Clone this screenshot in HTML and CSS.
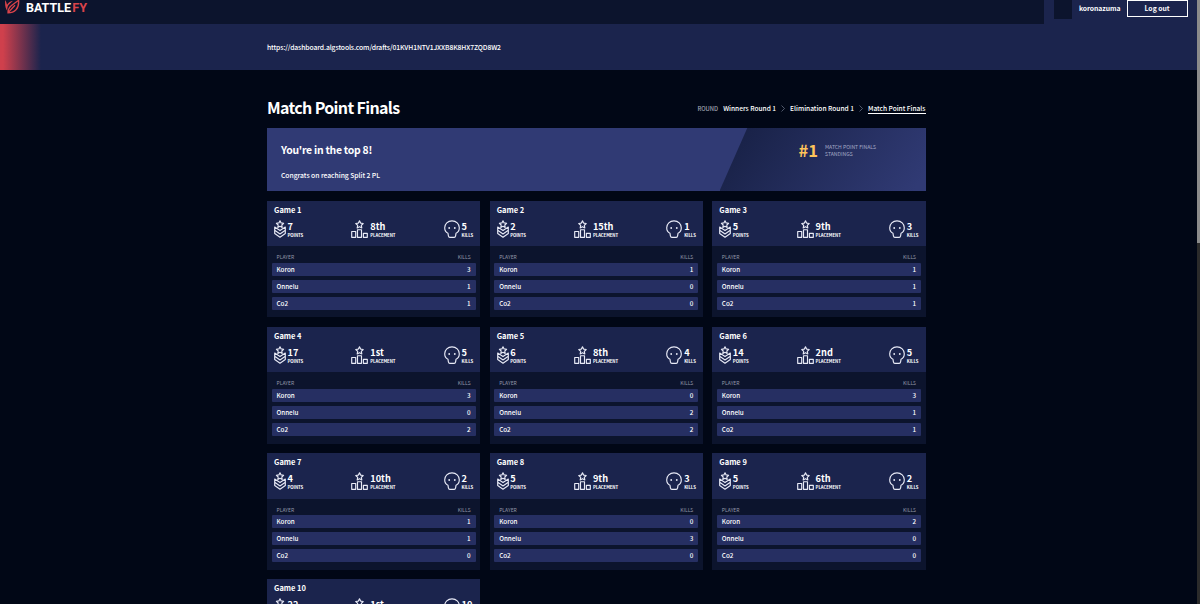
FILE: index.html
```html
<!DOCTYPE html>
<html lang="en">
<head>
  <meta charset="UTF-8">
  <meta name="viewport" content="width=device-width, initial-scale=1.0">
  <title>Battlefy</title>
  <link rel="stylesheet" href="styles.css">
</head>
<body>
  <svg class="sprite" aria-hidden="true">
    <symbol id="icon-points" viewBox="0 0 12 18">
      <path d="M6 .8l1.100 2.100 2.500.4-1.800 1.700.4 2.400L6 6.300 3.800 7.400l.4-2.400-1.800-1.700 2.500-.4z"/>
      <path d="M.7 7v6.600L6 17.200l5.300-3.600V7L6 10.600zM.7 10.300L6 13.900l5.300-3.600"/>
    </symbol>
    <symbol id="icon-placement" viewBox="0 0 17 18">
      <path d="M8.500.8l1.100 2.300 2.600.4-1.900 1.800.5 2.600-2.300-1.200-2.300 1.200.5-2.600-1.900-1.800 2.600-.4z"/>
      <path d="M.7 11.500h4v5.800h-4zM6.500 9.700h4v7.600h-4zM12.400 13.300h3.900v4h-3.900z"/>
    </symbol>
    <symbol id="icon-kills" viewBox="0 0 16 18">
      <path d="M8 .8C3.800.8.700 3.900.700 7.800c0 2.400 1.100 4.500 3.300 5.500l.4 2.500c.2 1 .6 1.500 1.400 1.500h4.400c.8 0 1.200-.5 1.400-1.500l.4-2.500c2.200-1 3.300-3.100 3.300-5.500C15.300 3.900 12.200.8 8 .8z"/>
      <circle class="eye" cx="5.200" cy="8" r=".9"/>
      <circle class="eye" cx="10.800" cy="8" r=".9"/>
    </symbol>
  </svg>

  <div class="page">
    <header class="topbar">
      <div class="brand">
        <svg class="brand-mark" viewBox="0 0 15 14">
          <path class="blade" d="M.2 0C-.3 4.500.400 8.500 2.300 11 2.200 8 2.500 6 4 4.500L8 .8C5.500 1.200 3.500 2.500 2 4.800 1.500 3 1.200 1.500.2 0z"/>
          <path class="edge" d="M3 12.800C3 9.500 4 7.500 6.500 5.500L13.600.3c.3 4-.6 7.300-2.600 9.400C9 11.800 6 12.800 3 12.800zM3 12.800L10 5.300"/>
        </svg>
        <svg class="brand-name" viewBox="0 0 62 14">
          <text x="0" y="12.300" textLength="45" lengthAdjust="spacingAndGlyphs">BATTLE</text>
          <text class="brand-accent" x="46.200" y="12.300" textLength="14.800" lengthAdjust="spacingAndGlyphs">FY</text>
        </svg>
      </div>
      <div class="account">
        <div class="avatar"></div>
        <span class="username">koronazuma</span>
        <button class="logout">Log out</button>
      </div>
    </header>

    <div class="notice">
      <span class="notice-link">https://dashboard.algstools.com/drafts/01KVH1NTV1JXXB8K8HX7ZQD8W2</span>
    </div>

    <main class="container">
      <div class="title-row">
        <h1>Match Point Finals</h1>
        <nav class="rounds">
          <span class="rounds-label">ROUND</span>
          <a>Winners Round 1</a>
          <svg class="chevron" viewBox="0 0 4 7"><path d="M.5.5l3 3-3 3"/></svg>
          <a>Elimination Round 1</a>
          <svg class="chevron" viewBox="0 0 4 7"><path d="M.5.5l3 3-3 3"/></svg>
          <a class="active">Match Point Finals</a>
        </nav>
      </div>

      <section class="banner">
        <div class="banner-text">
          <h2>You're in the top 8!</h2>
          <p>Congrats on reaching Split 2 PL</p>
        </div>
        <div class="standing">
          <span class="rank">#1</span>
          <span class="rank-label">MATCH POINT FINALS<br>STANDINGS</span>
        </div>
      </section>

      <section class="games" id="games"></section>
    </main>
  </div>
  <div class="scroll-track"><div class="scroll-thumb"></div></div>

  <script>
    const players = ['Koron', 'Onnelu', 'Co2'];
    const games = [
      { points: 7, placement: '8th', kills: [3, 1, 1] },
      { points: 2, placement: '15th', kills: [1, 0, 0] },
      { points: 5, placement: '9th', kills: [1, 1, 1] },
      { points: 17, placement: '1st', kills: [3, 0, 2] },
      { points: 6, placement: '8th', kills: [0, 2, 2] },
      { points: 14, placement: '2nd', kills: [3, 1, 1] },
      { points: 4, placement: '10th', kills: [1, 1, 0] },
      { points: 5, placement: '9th', kills: [0, 3, 0] },
      { points: 5, placement: '6th', kills: [2, 0, 0] },
      { points: 22, placement: '1st', kills: [4, 3, 3] }
    ];

    function stat(name, value) {
      return `
        <div class="stat ${name}">
          <svg class="icon"><use href="#icon-${name}"/></svg>
          <div class="stat-text"><b>${value}</b><small>${name.toUpperCase()}</small></div>
        </div>`;
    }

    document.getElementById('games').innerHTML = games.map((game, i) => {
      const total = game.kills.reduce((a, b) => a + b, 0);
      const rows = players.map((p, n) => `<div class="player"><span>${p}</span><span>${game.kills[n]}</span></div>`).join('');
      return `
        <article class="game">
          <div class="game-head">
            <h3>Game ${i + 1}</h3>
            <div class="stats">
              ${stat('points', game.points)}
              ${stat('placement', game.placement)}
              ${stat('kills', total)}
            </div>
          </div>
          <div class="game-body">
            <div class="columns"><span>PLAYER</span><span>KILLS</span></div>
            ${rows}
          </div>
        </article>`;
    }).join('');
  </script>
</body>
</html>
```
FILE: styles.css
```css
:root {
  --bg: #010716;
  --bar: #0c142d;
  --panel: #1b244d;
  --row: #262f62;
  --banner: #303a74;
  --gold: #ffc45a;
  --red: #d9434a;
}

* {
  box-sizing: border-box;
  margin: 0;
  padding: 0;
}

body {
  display: flex;
  height: 604px;
  overflow: hidden;
  background: var(--bg);
  color: #fff;
  font-family: "Noto Sans CJK SC", "Noto Sans", sans-serif;
}

.sprite {
  position: absolute;
  width: 0;
  height: 0;
}

.page {
  flex: 1;
  min-width: 0;
  height: 604px;
  overflow: hidden;
}

.topbar {
  display: flex;
  justify-content: space-between;
  height: 23.500px;
  background: var(--bar);
}

.brand {
  display: flex;
  padding-left: 5px;
  gap: 6px;
}

.brand-mark {
  width: 15px;
  height: 14px;
}

.blade {
  fill: var(--red);
}

.edge {
  fill: none;
  stroke: var(--red);
  stroke-width: 1.300;
}

.brand-name {
  width: 62px;
  height: 14px;
  font-family: Roboto, sans-serif;
  font-size: 13.500px;
  font-weight: 700;
  fill: #fff;
}

.brand-name .brand-accent {
  fill: var(--red);
}

.account {
  display: flex;
  width: 153px;
  padding: 0 9.500px 0 10px;
  background: var(--panel);
}

.avatar {
  width: 18px;
  height: 18.500px;
  background: var(--bar);
}

.username {
  width: 55px;
  padding-left: 7px;
  font-size: 6.800px;
  font-weight: 700;
  letter-spacing: -.05px;
  line-height: 17px;
}

.logout {
  width: 61px;
  height: 17px;
  margin-left: auto;
  border: 1px solid #fff;
  background: none;
  color: #fff;
  font: 700 6.800px/15px "Noto Sans CJK SC", sans-serif;
}

.notice {
  height: 46.500px;
  padding-left: 267px;
  background: linear-gradient(90deg, #cf404c 3px, var(--panel) 41px);
}

.notice-link {
  font-size: 6.800px;
  font-weight: 500;
  letter-spacing: -.12px;
  line-height: 46px;
}

.container {
  width: 658.500px;
  margin-left: 267px;
}

.title-row {
  display: flex;
  justify-content: space-between;
  height: 57.500px;
  padding-top: 27px;
}

h1 {
  margin-top: -1px;
  font-size: 16px;
  font-weight: 700;
  letter-spacing: -.65px;
  line-height: 22px;
}

.rounds {
  display: flex;
  align-items: center;
  height: 22px;
  gap: 5px;
  font-size: 6.600px;
  font-weight: 500;
  white-space: nowrap;
}

.rounds-label {
  color: #a0a4b2;
  font-size: 5.800px;
}

.rounds .active {
  margin-top: 1px;
  border-bottom: 1px solid #fff;
  line-height: 9px;
}

.chevron {
  width: 4px;
  height: 7px;
  fill: none;
  stroke: #737b91;
  stroke-width: .7;
}

.banner {
  display: flex;
  justify-content: space-between;
  height: 63.500px;
  background: var(--banner);
}

.banner-text {
  padding: 14px 0 0 14px;
}

h2 {
  font-size: 10.400px;
  font-weight: 700;
  letter-spacing: -.25px;
  line-height: 15px;
}

.banner-text p {
  margin-top: 13px;
  font-size: 6.800px;
  font-weight: 500;
  letter-spacing: -.05px;
  line-height: 10px;
}

.standing {
  display: flex;
  width: 206px;
  padding: 14px 0 0 79px;
  gap: 7px;
  background: linear-gradient(125deg, #192248 10%, var(--banner) 95%);
  clip-path: polygon(28px 0, 100% 0, 100% 100%, 0 100%);
}

.rank {
  color: var(--gold);
  font-size: 16.500px;
  font-weight: 700;
  line-height: 17px;
}

.rank-label {
  padding-top: 1px;
  color: #a4a9c6;
  font-size: 5.100px;
  line-height: 7px;
}

.games {
  display: grid;
  grid-template-columns: repeat(3, 1fr);
  gap: 9.500px;
  margin-top: 9.500px;
}

.game {
  height: 116.800px;
  background: var(--bar);
}

.game-head {
  height: 45.500px;
  padding: 3px 7px 0;
  background: var(--panel);
}

h3 {
  font-size: 7.500px;
  font-weight: 700;
  line-height: 11px;
}

.stats {
  display: flex;
  justify-content: space-between;
  margin-top: 5px;
}

.stat {
  display: flex;
  gap: 2px;
}

.icon {
  height: 18px;
  fill: none;
  stroke: #e8eaf6;
  stroke-width: 1.150;
  stroke-linejoin: round;
}

.eye {
  fill: #e8eaf6;
  stroke: none;
}

.points {
  gap: 1.500px;
}

.points .icon {
  width: 12px;
}

.placement .icon {
  width: 17px;
}

.kills .icon {
  width: 16px;
}

.stat-text b {
  display: block;
  font-size: 9.200px;
  font-weight: 700;
  line-height: 12px;
}

.stat-text small {
  display: block;
  font-size: 4.300px;
  font-weight: 700;
  letter-spacing: -.05px;
  line-height: 6px;
}

.game-body {
  padding: 6px 4.500px 0;
}

.columns {
  display: flex;
  justify-content: space-between;
  height: 10.700px;
  padding: 0 5px;
  color: #9297a8;
  font-size: 5px;
  line-height: 9px;
}

.player {
  display: flex;
  justify-content: space-between;
  height: 13px;
  margin-bottom: 4px;
  padding: 0 5px;
  border-radius: 1px;
  background: var(--row);
  font-size: 6.300px;
  font-weight: 500;
  line-height: 13px;
}

.scroll-track {
  width: 3px;
  background: #2b2b2b;
}

.scroll-thumb {
  height: 243px;
  background: #8b8b8b;
}
```
